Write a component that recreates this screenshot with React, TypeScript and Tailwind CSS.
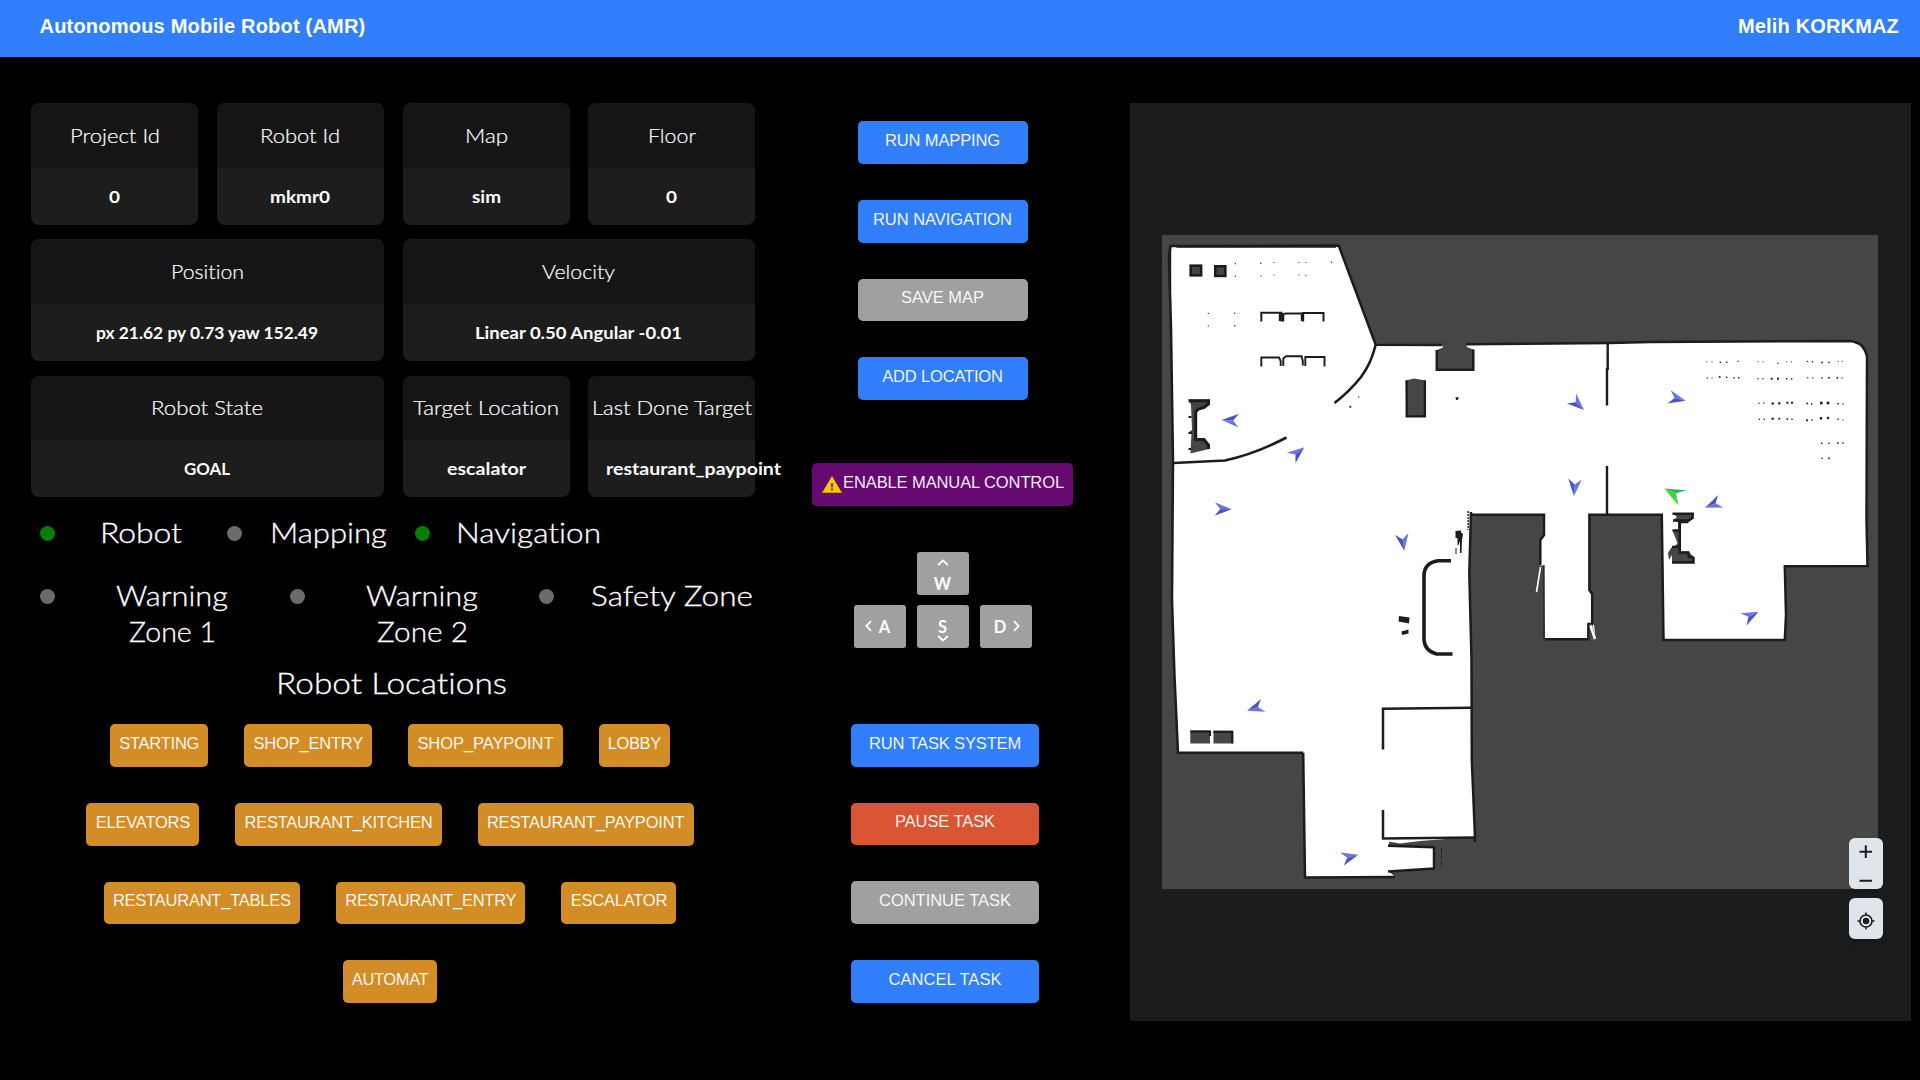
import { useLayoutEffect, useRef } from "react";
import type { ReactNode } from "react";

/** Single line of text tracked so that it fills the given width. */
function FitText({ children, width, className = "" }: { children: string; width: number; className?: string }) {
  const ref = useRef<HTMLSpanElement>(null);
  useLayoutEffect(() => {
    const el = ref.current;
    if (!el) return;
    el.style.letterSpacing = "0px";
    const natural = el.getBoundingClientRect().width;
    el.style.letterSpacing = `${(width - natural) / children.length}px`;
  }, [children, width]);
  return (
    <span ref={ref} className={`inline-block whitespace-nowrap ${className}`}>
      {children}
    </span>
  );
}

/** Single line of text whose glyphs are widened to fill the given width. */
function WideText({ children, width, className = "" }: { children: string; width: number; className?: string }) {
  const ref = useRef<HTMLSpanElement>(null);
  useLayoutEffect(() => {
    const el = ref.current;
    if (!el) return;
    el.style.transform = "none";
    const natural = el.getBoundingClientRect().width;
    el.style.transform = `scaleX(${width / natural})`;
  }, [children, width]);
  return (
    <span className={`inline-block text-left whitespace-nowrap [font-variant-ligatures:none] ${className}`} style={{ width }}>
      <span ref={ref} className="inline-block origin-left">
        {children}
      </span>
    </span>
  );
}

type CardProps = { title: string; titleWidth: number; value: string; valueWidth: number; className?: string };

function Card({ title, titleWidth, value, valueWidth, className = "" }: CardProps) {
  const overflow = valueWidth > 160;
  return (
    <div className={`flex h-[121.7px] flex-col rounded-lg bg-[#1d1d1d] font-['Lato',sans-serif] text-white ${className}`}>
      <div className="flex h-[65px] items-center justify-center rounded-t-lg bg-[#151515] pb-[1.4px] text-[20px] font-light [-webkit-text-stroke:0.2px_white]">
        <WideText width={titleWidth}>{title}</WideText>
      </div>
      <div className={`flex h-[57px] items-center text-[17px] font-bold ${overflow && !className ? "justify-start pl-[18px]" : "justify-center"}`}>
        <WideText className="shrink-0" width={valueWidth}>{value}</WideText>
      </div>
    </div>
  );
}

const tones = {
  blue: "bg-[#317ffc]",
  gray: "bg-[#a0a0a0]",
  red: "bg-[#da5534]",
  purple: "bg-[#660a72]",
  orange: "bg-[#d28d26]",
};

type BtnProps = { label: string; textWidth: number; tone: keyof typeof tones; className?: string; icon?: ReactNode };

function Btn({ label, textWidth, tone, className = "", icon }: BtnProps) {
  return (
    <button
      className={`flex h-[42.67px] items-center justify-center rounded-[5px] pb-[4.4px] font-['Liberation_Sans',sans-serif] text-[16.5px] text-white/95 ${tones[tone]} ${className}`}
    >
      {icon}
      <FitText width={textWidth}>{label}</FitText>
    </button>
  );
}

function Dot({ on = false }: { on?: boolean }) {
  return <span className={`mt-[12.5px] size-[14.5px] shrink-0 rounded-full ${on ? "bg-[#008000]" : "bg-[#6b6b6b]"}`} />;
}

function Chevron({ d, w, h }: { d: string; w: number; h: number }) {
  return (
    <svg width={w} height={h} viewBox={`0 0 ${w} ${h}`} fill="none" stroke="#fff" strokeWidth="1.8">
      <path d={d} />
    </svg>
  );
}

const keyClass =
  "flex h-[43px] w-[52px] items-center justify-center rounded-[3px] bg-[#a0a0a0] font-['Lato',sans-serif] text-[16.5px] leading-none font-bold text-white";

const statusClass =
  "flex pl-[9px] font-['Lato',sans-serif] text-[28px] leading-[36px] font-light [-webkit-text-stroke:0.3px_white]";

const locationRows: [string, number][][] = [
  [["STARTING", 80], ["SHOP_ENTRY", 109.5], ["SHOP_PAYPOINT", 136], ["LOBBY", 53]],
  [["ELEVATORS", 94.5], ["RESTAURANT_KITCHEN", 188], ["RESTAURANT_PAYPOINT", 197.5]],
  [["RESTAURANT_TABLES", 178], ["RESTAURANT_ENTRY", 171], ["ESCALATOR", 96.5]],
  [["AUTOMAT", 76.5]],
];

function Arrow({ x, y, angle }: { x: number; y: number; angle: number }) {
  return (
    <g transform={`translate(${x} ${y}) rotate(${angle})`}>
      <path d="M0 0L-17 -6.8L-11.5 0Z" fill="#6c74e5" />
      <path d="M0 0L-17 6.8L-11.5 0Z" fill="#4a55c3" />
    </g>
  );
}

const arrows: [number, number, number][] = [
  [1221.7, 420, 182],
  [1304.3, 447.3, -39.5],
  [1584, 410, 43],
  [1574, 496, 93.5],
  [1404.3, 550.7, 81.5],
  [1231.7, 509.3, 1],
  [1247, 710.7, 161.7],
  [1358.3, 854.7, -15],
  [1685.7, 400.7, 13.3],
  [1705, 507.7, 157.6],
  [1758.7, 611.7, -26.6],
];

/* Small isolated obstacle returns: x, y, size */
const specks: [number, number, number][] = [
  [1235.3, 263.7, 1.2], [1260.7, 263.3, 1.2], [1274, 262.5, 1], [1299, 262.5, 1], [1306, 262.5, 1], [1331.5, 262.3, 1.2],
  [1235.3, 276.3, 1.2], [1261, 276, 1.1], [1274, 275, 1], [1299, 275, 1], [1306, 275.7, 1],
  [1208.3, 313.5, 1.1], [1234.7, 313.3, 1.2], [1208.3, 326, 1.1], [1234.7, 325.7, 1.3],
  [1350.3, 406.8, 1.8], [1358.7, 397, 1.2],
  [1707, 361.8, 1], [1712, 361.8, 1], [1720.3, 362.3, 1.4], [1726.7, 362.3, 1.4], [1738, 361.3, 1.2],
  [1758, 361.8, 1], [1763, 361.8, 1], [1778, 363.3, 1.2], [1786.7, 361.8, 1], [1791.3, 361.8, 1],
  [1807.5, 361.5, 1.2], [1812.5, 361.7, 1.3], [1822, 362.5, 1.6], [1829, 362.5, 1.5], [1838, 361.3, 1], [1842.3, 361.3, 1],
  [1707.3, 378, 1.2], [1712, 378, 1], [1719.7, 377, 1.7], [1726.7, 377.3, 1.4], [1734, 377.7, 1.4], [1738.7, 377.7, 1.5],
  [1758, 378.7, 1.2], [1763, 378.7, 1.2], [1771.7, 378.7, 1.9], [1778, 378.7, 2], [1786.7, 378.7, 1.4], [1791.7, 379, 1.4],
  [1807.7, 377.8, 1.2], [1812.7, 377.8, 1.2], [1822, 378, 1.4], [1829, 377.7, 1.6], [1837.3, 378, 1.6], [1842, 378, 1.2],
  [1759, 403.3, 1.2], [1763.7, 403, 1.2], [1772.7, 403.5, 2.2], [1779.3, 403.3, 2.2], [1787.3, 402.7, 2], [1792, 402.7, 2],
  [1807.3, 403.5, 1.7], [1811.7, 404, 1.4], [1821.3, 403, 2.6], [1828, 403, 2.6], [1838, 403.7, 1.5], [1843, 404, 1.3],
  [1759.3, 419.3, 1.3], [1764.3, 419.3, 1.3], [1772.7, 418.7, 2.2], [1779.3, 418.7, 1.8], [1787.3, 419, 1.6], [1792, 419.3, 1.3],
  [1807, 420.3, 1.9], [1812, 420, 1.4], [1821, 418.3, 2.4], [1828, 418, 2.2], [1838, 419.3, 1.4], [1843, 420, 1.1],
  [1821.7, 443.3, 1.5], [1829, 443.3, 1.4], [1838, 443, 1.6], [1843, 443, 1.4], [1822, 458.3, 1.3], [1829, 458.3, 1.6],
];

function FloorMap() {
  return (
    <svg className="block h-[654px] w-[716px]" viewBox="1162 235 716 654">
      <rect x="1162" y="235" width="716" height="654" fill="#464646" />
      <path
        d="M1170.5 246L1338.7 245.5L1375.7 344.8L1442 345L1443 347.5L1436.8 350V369.7H1473.3V349.5L1467 347L1466 344.3L1610 343L1650 342L1850 341Q1857 342 1861 345Q1866 350 1867 357L1866.5 520L1867.5 566L1784.8 566.3L1786 615L1784.8 640H1663.5L1661.8 514.7H1589.4V590L1592.2 594V624L1594 624.5L1595.5 639L1588 639.3H1545L1544 565.5H1540V539L1544 535V514.7H1471L1469.3 573L1471.5 660L1471.8 760L1475 836.7L1420 841L1389 842L1389 845.7L1434 847.3V868.5L1389 871.5L1395 876.7L1305 877.6L1303.2 752.8L1178 752.7L1174.5 676L1172 600L1173 460L1171 327L1169 257Z"
        fill="#fff"
      />
      <g fill="none" stroke="#1b1c1e" strokeWidth="2.5" strokeLinejoin="miter">
        <path d="M1303.2 752.8L1178 752.7L1174.5 676L1172 600L1173 460L1171 327L1169 257L1170.5 246L1338.7 245.5L1375.7 344.8L1442 345" />
        <path d="M1436.8 350V369.7H1473.3V349.5M1466 344.3L1610 343L1650 342L1850 341Q1857 342 1861 345Q1866 350 1867 357L1866.5 520L1867.5 566L1784.8 566.3L1786 615L1784.8 640H1663.5L1661.8 514.7H1589.4V590L1592.2 594V624H1588.5V639.3H1545" />
        <path d="M1540.3 565V540L1544 535V514.7H1471M1471 512L1469.3 573L1471.5 660L1471.8 760L1475 836.7V842" />
        <path d="M1475 837.5L1383 838.5V810M1383 749.5V708.8L1471.8 707.8" />
        <path d="M1388 845.7L1434 847.3V868.5L1388 871.5M1395 877L1305 877.6L1303.2 752.8" />
        <path d="M1544 565V639" strokeWidth="1.2" />
        <path d="M1607.7 343V370M1607 368V405.5M1607 466V514" strokeWidth="2.4" />
        <path d="M1375.7 344.8Q1371 364 1361 377Q1349 392 1334.5 403" strokeWidth="2.6" />
        <path d="M1173.5 463L1225 460.5Q1255 454 1286.5 437.5" strokeWidth="2.6" />
        <path d="M1451 560.8H1438Q1424 563 1424 576V640Q1425 651 1436.5 654H1452.5" strokeWidth="3.6" />
        <path d="M1170 247V290M1176.5 246.5H1336" strokeWidth="2.4" />
      </g>
      <path d="M1540.5 567L1536.5 592" stroke="#fff" strokeWidth="1.6" />
      <path d="M1383 840.5L1420 841L1400 843.5Z" fill="#fff" />
      <path d="M1441.5 848V869" stroke="#1b1c1e" strokeWidth="0.9" strokeDasharray="5 2 3 3" />

      {/* pillars */}
      <g fill="#464646" stroke="#1b1c1e" strokeWidth="2.6">
        <rect x="1190.7" y="265.7" width="10.4" height="9.6" />
        <rect x="1215.3" y="266.3" width="10" height="9.6" />
      </g>
      <path d="M1405.5 380.5L1414 378.5L1426 380.5V417H1406.5Z" fill="#464646" />
      <path d="M1406.7 380.5V416.3H1424.9V380.5" fill="none" stroke="#1b1c1e" strokeWidth="2.3" />
      <path d="M1190.3 730.5H1210V743.5H1190.3ZM1213.5 730.5H1233V743.5H1213.5Z" fill="#464646" />
      <path d="M1190.3 731.5H1210M1210 730.5V736M1213.5 732H1232.3V743.5" fill="none" stroke="#1b1c1e" strokeWidth="2.2" />

      {/* seating */}
      <g fill="none" stroke="#1b1c1e" strokeWidth="2">
        <path d="M1261.3 321.5V312.7H1281.5V321.5M1283.3 321.5V314L1286 313.5H1302M1303 321.5V313H1323.5V321.5" />
        <path d="M1280.5 313V321M1302.5 313V321" strokeWidth="3.4" />
        <path d="M1261.3 366.5V357.5H1279L1280.7 361V366M1283.3 366V358.5L1286 356.3H1301.5L1302.8 361V365.5M1305.3 366V357H1324.5V366.5" strokeWidth="1.9" />
      </g>

      {/* left conveyor */}
      <path d="M1188.5 399.5H1209V404L1205 408.5H1198L1197 412V439L1204 440L1209 446V449L1190.5 453.5L1191.5 432L1189 431.5L1192 430L1191 405Z" fill="#464646" />
      <path d="M1188.5 400.7H1208.5V404L1204 407.5L1198 409.3L1195.7 412V439.5H1204L1208.5 445V449" fill="none" stroke="#1b1c1e" strokeWidth="3" />
      <path d="M1188.5 417H1191.5M1188.5 433H1192M1188.5 449H1191" stroke="#1b1c1e" strokeWidth="2" />

      {/* right conveyor */}
      <path d="M1672.5 513H1693.5V518L1688 523H1681V551.5H1689L1693.5 557.5V563H1672V555L1669 560L1668 553L1671 548L1676 545L1677.5 543L1672.5 530.5H1678V522L1673 520.5L1677 517Z" fill="#464646" />
      <path d="M1672.5 513.7H1694M1692.5 513V518L1688 520.5H1673M1678 522H1688M1679.8 520V552.5H1688L1689 557H1693.5M1672 562.5H1693.5V557M1672.5 530.5H1681M1672 547H1681" fill="none" stroke="#1b1c1e" strokeWidth="2.5" />

      {/* clutter */}
      <g fill="#1b1c1e">
        <path d="M1399 616L1409.5 617.5L1409 623.5L1398.5 621.5ZM1401.5 631.5L1408.5 629.5V633.5L1402 635Z" />
        <path d="M1455.5 531L1461 530.5V532.5L1463 534L1462 540L1461.5 553H1460V541L1458.5 545H1457.5V538H1455.5ZM1455.5 548H1456.5V554H1455.5Z" />
        <path d="M1455.3 397.3H1458.8L1457.8 400H1456.3Z" />
      </g>
      <path d="M1468.2 511V530" stroke="#1b1c1e" strokeWidth="1.4" strokeDasharray="2 1" />
      <path d="M1588.5 624H1592L1596 639H1588.5Z" fill="#464646" />
      <path d="M1590.5 625.5L1595 639" stroke="#fff" strokeWidth="2.5" />
      <path d="M1588.3 624V640" stroke="#1b1c1e" strokeWidth="1.8" />
      {specks.map(([x, y, s], i) => (
        <rect key={i} x={x - s / 2} y={y - s / 2} width={s} height={s} fill="#1b1c1e" />
      ))}

      {arrows.map(([x, y, a], i) => (
        <Arrow key={i} x={x} y={y} angle={a} />
      ))}
      <path d="M1664.3 488.5L1686.8 490.3L1676 493.3Z" fill="#2bb267" />
      <path d="M1664.3 488.5L1676 493.3L1678.5 505.5Z" fill="#3fd53c" />
    </svg>
  );
}

export default function App() {
  return (
    <div className="flex h-[1080px] w-[1920px] flex-col overflow-hidden bg-black text-white">
      <header className="flex h-[57px] shrink-0 items-center justify-between bg-[#317ffc] pr-[21px] pb-[5px] pl-[39.5px] font-['Liberation_Sans',sans-serif] text-[20px] font-bold">
        <FitText width={326}>Autonomous Mobile Robot (AMR)</FitText>
        <FitText width={161}>Melih KORKMAZ</FitText>
      </header>

      <main className="flex min-h-0 flex-1">
        <section className="ml-[31px] flex w-[725px] shrink-0 flex-col pt-[46px]">
          <div className="grid grid-cols-[167px_167px_167px_167px] gap-x-[18.8px] gap-y-[14.6px]">
            <Card title="Project Id" titleWidth={90} value="0" valueWidth={11} />
            <Card title="Robot Id" titleWidth={80} value="mkmr0" valueWidth={60} />
            <Card title="Map" titleWidth={43} value="sim" valueWidth={29} />
            <Card title="Floor" titleWidth={48} value="0" valueWidth={11} />
            <Card className="col-span-2" title="Position" titleWidth={73} value="px 21.62 py 0.73 yaw 152.49" valueWidth={222} />
            <Card className="col-span-2" title="Velocity" titleWidth={73} value="Linear 0.50 Angular -0.01" valueWidth={207} />
            <Card className="col-span-2" title="Robot State" titleWidth={112} value="GOAL" valueWidth={46} />
            <Card title="Target Location" titleWidth={146} value="escalator" valueWidth={79} />
            <Card title="Last Done Target" titleWidth={160} value="restaurant_paypoint" valueWidth={175} />
          </div>

          <div className={`mt-[16.7px] ${statusClass}`}>
            <div className="flex w-[187px] shrink-0">
              <Dot on />
              <WideText className="ml-[45px]" width={82}>Robot</WideText>
            </div>
            <div className="flex w-[188px] shrink-0">
              <Dot />
              <WideText className="ml-[28px]" width={117}>Mapping</WideText>
            </div>
            <div className="flex shrink-0">
              <Dot on />
              <WideText className="ml-[26.5px]" width={145}>Navigation</WideText>
            </div>
          </div>

          <div className={`mt-[27px] ${statusClass}`}>
            <div className="flex w-[250px] shrink-0">
              <Dot />
              <div className="ml-[61px] flex w-[113px] flex-col items-center">
                <WideText width={112}>Warning</WideText>
                <WideText width={87}>Zone 1</WideText>
              </div>
            </div>
            <div className="flex w-[249px] shrink-0">
              <Dot />
              <div className="ml-[61px] flex w-[113px] flex-col items-center">
                <WideText width={112}>Warning</WideText>
                <WideText width={91}>Zone 2</WideText>
              </div>
            </div>
            <div className="flex shrink-0">
              <Dot />
              <WideText className="ml-[37px]" width={162}>Safety Zone</WideText>
            </div>
          </div>

          <h2 className="mt-[13px] mb-[22.3px] ml-[-5px] text-center font-['Lato',sans-serif] text-[30px] leading-[40px] font-light [-webkit-text-stroke:0.3px_white]">
            <WideText width={231}>Robot Locations</WideText>
          </h2>

          <div className="mr-[7px] flex flex-col gap-[36px]">
            {locationRows.map((row, i) => (
              <div key={i} className="flex justify-center gap-[36px]">
                {row.map(([name, w]) => (
                  <Btn key={name} label={name} textWidth={w} tone="orange" className="px-[9.2px]" />
                ))}
              </div>
            ))}
          </div>
        </section>

        <section className="ml-[56px] flex w-[261px] shrink-0 flex-col items-center pt-[64.3px]">
          <div className="flex flex-col gap-[36px]">
            <Btn label="RUN MAPPING" textWidth={115} tone="blue" className="w-[170px]" />
            <Btn label="RUN NAVIGATION" textWidth={139} tone="blue" className="w-[170px]" />
            <Btn label="SAVE MAP" textWidth={83} tone="gray" className="w-[170px]" />
            <Btn label="ADD LOCATION" textWidth={120.5} tone="blue" className="w-[170px]" />
          </div>
          <Btn
            label="ENABLE MANUAL CONTROL"
            textWidth={221}
            tone="purple"
            className="mt-[63px] w-[261px] pl-[1px]"
            icon={
              <svg className="mt-[5px] mr-[1px]" width="20" height="17" viewBox="0 0 20 17">
                <path d="M10 0L20 17H0Z" fill="#fdc800" />
                <path d="M0.6 16L19.4 16L20 17H0Z" fill="#c99a1c" />
                <path d="M8.9 7H11.1V11.3H8.9ZM8.9 12.6H11.1V14.6H8.9Z" fill="#6b4a2a" />
              </svg>
            }
          />
          <div className="mt-[46px] grid grid-cols-[52px_52px_52px] gap-x-[11px] gap-y-[10px]">
            <button className={`${keyClass} col-start-2 flex-col gap-[11px] pt-[3px]`}>
              <Chevron w={12} h={7} d="M1.2 6L6 1.4L10.8 6" />
              <span className="-mt-[1px] h-[15px]">W</span>
            </button>
            <button className={`${keyClass} col-start-1 gap-[7px] pr-[4px]`}>
              <Chevron w={7} h={12} d="M6 1.2L1.4 6L6 10.8" />
              <span className="pt-[2px]">A</span>
            </button>
            <button className={`${keyClass} flex-col pt-[9px]`}>
              <span className="h-[16px]">S</span>
              <Chevron w={12} h={7} d="M1.2 1L6 5.6L10.8 1" />
            </button>
            <button className={`${keyClass} gap-[7px] pl-[3px]`}>
              <span className="pt-[2px]">D</span>
              <Chevron w={7} h={12} d="M1 1.2L5.6 6L1 10.8" />
            </button>
          </div>
          <div className="mt-[76.4px] ml-[5px] flex flex-col gap-[36px]">
            <Btn label="RUN TASK SYSTEM" textWidth={152} tone="blue" className="w-[188px]" />
            <Btn label="PAUSE TASK" textWidth={100} tone="red" className="w-[188px]" />
            <Btn label="CONTINUE TASK" textWidth={132} tone="gray" className="w-[188px]" />
            <Btn label="CANCEL TASK" textWidth={113} tone="blue" className="w-[188px]" />
          </div>
        </section>

        <section className="relative mt-[46px] ml-[57px] h-[918px] w-[781px] shrink-0 bg-[#1b1c1e] pt-[132px] pl-[32px]">
          <FloorMap />
          <div className="absolute right-[28px] bottom-[82px] flex flex-col gap-[9px]">
            <div className="flex h-[51px] w-[34px] flex-col items-center rounded-[6px] bg-[#dfe5eb] shadow-md">
              <svg width="34" height="51" viewBox="0 0 34 51" stroke="#1b1c1e" strokeWidth="2">
                <path d="M10.5 13.7H23M16.8 7.3V20M10.5 42.7H23" />
              </svg>
            </div>
            <div className="flex h-[41px] w-[34px] items-center justify-center rounded-[6px] bg-[#dfe5eb] shadow-md">
              <svg className="mt-[5px]" width="18" height="18" viewBox="0 0 18 18" fill="none" stroke="#1b1c1e" strokeWidth="1.6">
                <circle cx="9" cy="9" r="6" />
                <circle cx="9" cy="9" r="3.2" fill="#1b1c1e" stroke="none" />
                <path d="M9 0.5V3M9 15V17.5M0.5 9H3M15 9H17.5" />
              </svg>
            </div>
          </div>
        </section>
      </main>
    </div>
  );
}
